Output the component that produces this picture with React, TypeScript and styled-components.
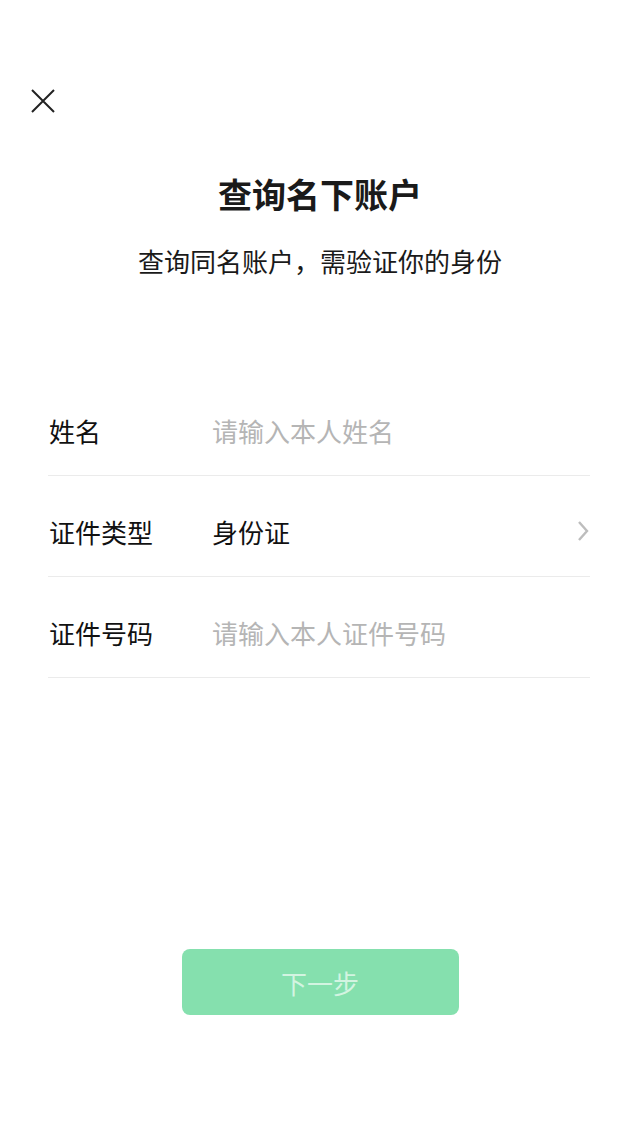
import styled, { createGlobalStyle } from 'styled-components';

const GlobalStyle = createGlobalStyle`
  html, body {
    margin: 0;
    padding: 0;
    background: #ffffff;
    font-family: "Noto Sans CJK SC", "Noto Sans", sans-serif;
  }
  * { box-sizing: border-box; }
`;

const Page = styled.main`
  width: 640px;
  min-height: 1136px;
  background: #fff;
  padding-top: 89px;
  display: flex;
  flex-direction: column;
`;

const CloseButton = styled.button`
  width: 24px;
  height: 24px;
  margin-left: 31px;
  padding: 0;
  border: none;
  background: none;
  display: flex;
  cursor: pointer;
`;

const Title = styled.h1`
  margin: 61px 0 0;
  font-size: 34px;
  line-height: 40px;
  font-weight: 700;
  color: #1a1a1a;
  text-align: center;
`;

const Subtitle = styled.p`
  margin: 29px 0 0;
  font-size: 26px;
  line-height: 36px;
  color: #1a1a1a;
  text-align: center;
`;

const Form = styled.section`
  margin: 96px 50px 0 48px;
  display: flex;
  flex-direction: column;
`;

const Row = styled.div`
  height: 101px;
  padding-top: 10px;
  display: flex;
  align-items: center;
  border-bottom: 1px solid #ebebeb;
`;

const Label = styled.span`
  width: 164px;
  padding-left: 1px;
  flex-shrink: 0;
  font-size: 26px;
  color: #111;
`;

const Value = styled.span<{ $placeholder?: boolean }>`
  flex: 1;
  font-size: 26px;
  color: ${({ $placeholder }) => ($placeholder ? '#b5b5b5' : '#111')};
`;

const Chevron = styled.svg`
  width: 12px;
  height: 22px;
  margin-right: 1px;
`;

const NextButton = styled.button`
  align-self: center;
  margin-top: 271px;
  width: 277px;
  height: 66px;
  border: none;
  border-radius: 8px;
  background: #85e0ae;
  color: #d3f4e1;
  font-family: inherit;
  font-size: 26px;
  cursor: default;
`;

const fields = [
  { label: '姓名', value: '请输入本人姓名', placeholder: true },
  { label: '证件类型', value: '身份证', placeholder: false, arrow: true },
  { label: '证件号码', value: '请输入本人证件号码', placeholder: true },
];

export default function App() {
  return (
    <Page>
      <GlobalStyle />
      <CloseButton aria-label="关闭">
        <svg width="24" height="24" viewBox="0 0 24 24">
          <path d="M1 1 L23 23 M23 1 L1 23" stroke="#222" strokeWidth="2" fill="none" />
        </svg>
      </CloseButton>
      <Title>查询名下账户</Title>
      <Subtitle>查询同名账户，需验证你的身份</Subtitle>
      <Form>
        {fields.map((f) => (
          <Row key={f.label}>
            <Label>{f.label}</Label>
            <Value $placeholder={f.placeholder}>{f.value}</Value>
            {f.arrow && (
              <Chevron viewBox="0 0 12 22">
                <path d="M2 2 L10 11 L2 20" stroke="#bdbdbd" strokeWidth="2.4" fill="none" />
              </Chevron>
            )}
          </Row>
        ))}
      </Form>
      <NextButton>下一步</NextButton>
    </Page>
  );
}
